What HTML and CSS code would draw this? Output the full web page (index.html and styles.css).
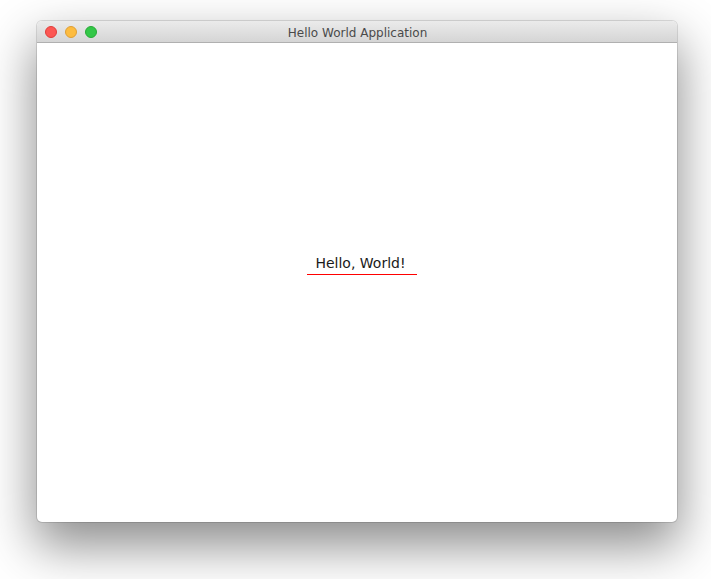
FILE: index.html
```html
<!DOCTYPE html>
<html>
<head>
<meta charset="utf-8">
<link rel="stylesheet" href="styles.css">
</head>
<body>
<div class="window">
  <div class="titlebar">
    <div class="lights">
      <span class="light red"></span>
      <span class="light yellow"></span>
      <span class="light green"></span>
    </div>
    <div class="title">Hello World Application</div>
  </div>
  <div class="content">
    <div class="field">Hello, World!</div>
  </div>
</div>
</body>
</html>
```

FILE: styles.css
```css
html, body {
  margin: 0;
  padding: 0;
  background: #ffffff;
  width: 711px;
  height: 579px;
  overflow: hidden;
}
body {
  padding-top: 21px;
  box-sizing: border-box;
}
.window {
  margin-left: 37px;
  width: 640px;
  height: 501px;
  border-radius: 5px;
  background: #ffffff;
  box-shadow: 0 22px 50px 2px rgba(0,0,0,0.45), 0 0 0 1px rgba(0,0,0,0.12);
  display: flex;
  flex-direction: column;
  overflow: hidden;
}
.titlebar {
  position: relative;
  height: 22px;
  box-sizing: border-box;
  background: linear-gradient(#ebebeb, #d5d5d5);
  border-bottom: 1px solid #b0b0b0;
  display: flex;
  align-items: center;
  justify-content: center;
}
.lights {
  position: absolute;
  left: 8px;
  top: 5px;
  display: flex;
  gap: 8px;
}
.light {
  width: 12px;
  height: 12px;
  border-radius: 50%;
  box-sizing: border-box;
}
.red { background: #fc5753; border: 1px solid #df3d39; }
.yellow { background: #fdbc40; border: 1px solid #de9f34; }
.green { background: #33c748; border: 1px solid #27aa35; }
.title {
  font-family: "DejaVu Sans", sans-serif;
  font-size: 12px;
  color: #4a4a4a;
  margin-left: 1px;
  padding-top: 2px;
}
.content {
  flex: 1;
  display: flex;
  flex-direction: column;
  align-items: center;
  padding-top: 210px;
  padding-left: 9px;
}
.field {
  width: 110px;
  box-sizing: border-box;
  text-align: center;
  font-family: "DejaVu Sans", sans-serif;
  font-size: 14px;
  line-height: 21px;
  color: #1a1a1a;
  border-bottom: 1px solid #ff0000;
  padding-left: 1px;
  padding-right: 3px;
}
```
